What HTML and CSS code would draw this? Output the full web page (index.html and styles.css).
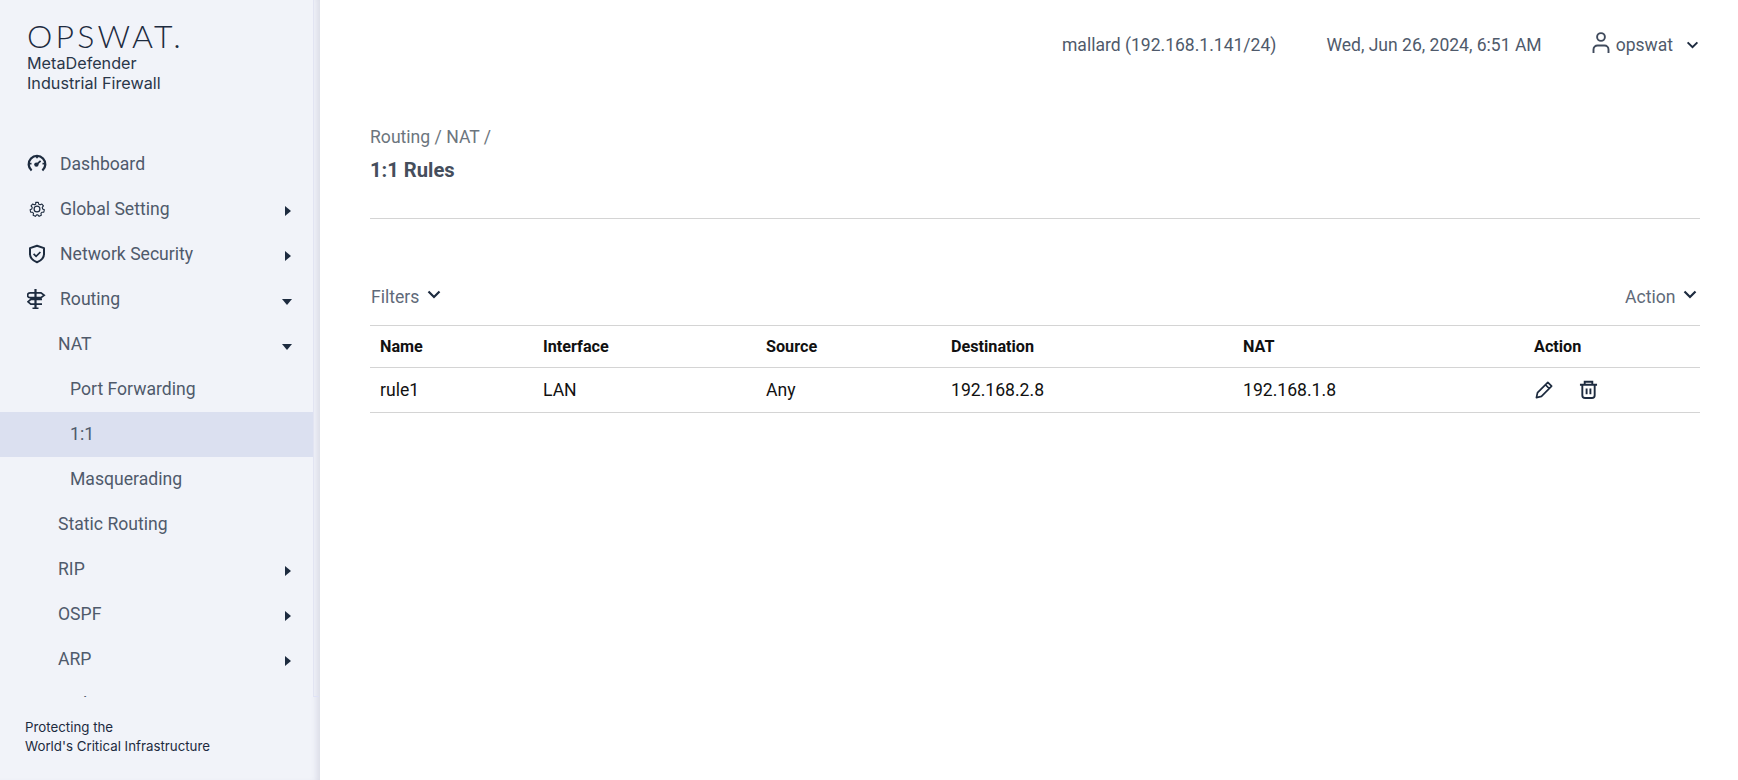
FILE: index.html
```html
<!DOCTYPE html>
<html lang="en">
<head>
<meta charset="utf-8">
<title>1:1 Rules</title>
<link rel="stylesheet" href="styles.css">
</head>
<body>
<div class="app">
  <aside class="sidebar">
    <div class="sidebar-body">
      <div class="sidebar-scroll">
        <div class="brand">
          <div class="logo">OPSWAT.</div>
          <div class="product">MetaDefender<br>Industrial Firewall</div>
        </div>
        <nav class="nav">
          <a class="item"><svg class="ico" viewBox="0 0 20 20"><path d="M4.600 16.500A8.300 8.300 0 1 1 15.400 16.500" fill="none" stroke="#1d2b3f" stroke-width="2.300"/><path d="M2 9.600h2.500M15.500 9.600H18M10 2v2.200" stroke="#1d2b3f" stroke-width="1.800"/><circle cx="9.400" cy="10.600" r="2.200" fill="#1d2b3f"/><path d="M9.800 10.300l3.800-3.500" stroke="#1d2b3f" stroke-width="1.800"/></svg><span class="label">Dashboard</span></a>
          <a class="item"><svg class="ico" viewBox="0 0 20 20"><path d="M8.600 2.800h2.800l.5 2 1.500.7 1.900-.9 1.700 2.100-1.300 1.600.4 1.600 1.900.9-.6 2.600-2.100.1-1 1.300.4 2-2.400 1.200-1.400-1.600H9.600l-1.400 1.600-2.400-1.200.4-2-1-1.300-2.100-.1-.6-2.600 1.900-.9.4-1.600-1.300-1.600 1.700-2.100 1.900.9 1.500-.7z" transform="translate(.8 .8) scale(.92)" fill="none" stroke="#1d2b3f" stroke-width="1.200" stroke-linejoin="round"/><circle cx="10" cy="10" r="2.900" fill="none" stroke="#1d2b3f" stroke-width="1.200"/></svg><span class="label">Global Setting</span><i class="caret-r"></i></a>
          <a class="item"><svg class="ico" viewBox="0 0 20 20"><path d="M10 1.800l7 2.300v5.800c0 4.200-3 6.800-7 8.300-4-1.500-7-4.100-7-8.300V4.100z" fill="none" stroke="#1d2b3f" stroke-width="2" stroke-linejoin="round"/><path d="M6.600 9.800l2.500 2.500 4.300-4.300" fill="none" stroke="#1d2b3f" stroke-width="1.700"/></svg><span class="label">Network Security</span><i class="caret-r"></i></a>
          <a class="item"><svg class="ico" viewBox="0 0 20 20"><path d="M8.500 0v19.500M5.500 19.500h6" stroke="#1d2b3f" stroke-width="2.200" fill="none"/><path d="M3 3.800h11l3.200 2.400L14 8.600H3a2.400 2.400 0 0 1 0-4.800zM15 10.400H3.800L1 12.800l2.800 2.400H15" fill="none" stroke="#1d2b3f" stroke-width="1.700"/></svg><span class="label">Routing</span><i class="caret-d"></i></a>
          <a class="item sub"><span class="label">NAT</span><i class="caret-d"></i></a>
          <a class="item subsub"><span class="label">Port Forwarding</span></a>
          <a class="item subsub active"><span class="label">1:1</span></a>
          <a class="item subsub"><span class="label">Masquerading</span></a>
          <a class="item sub"><span class="label">Static Routing</span></a>
          <a class="item sub"><span class="label">RIP</span><i class="caret-r"></i></a>
          <a class="item sub"><span class="label">OSPF</span><i class="caret-r"></i></a>
          <a class="item sub"><span class="label">ARP</span><i class="caret-r"></i></a>
          <a class="item sub"><span class="label">Multicast</span></a>
        </nav>
      </div>
      <div class="track"></div>
    </div>
    <div class="tagline">Protecting the<br>World's Critical Infrastructure</div>
  </aside>
  <main class="main">
    <header class="topbar">
      <span>mallard (192.168.1.141/24)</span>
      <span>Wed, Jun 26, 2024, 6:51 AM</span>
      <span class="user">
        <svg class="user-ico" viewBox="0 0 18 21"><circle cx="9" cy="5" r="3.900" fill="none" stroke="#3f4a5c" stroke-width="1.900"/><path d="M1.500 21v-3.500a4 4 0 0 1 4-4h7a4 4 0 0 1 4 4V21" fill="none" stroke="#3f4a5c" stroke-width="1.900"/></svg>
        <span>opswat</span>
        <svg class="user-chev" viewBox="0 0 14 9"><path d="M1.500 1.500L7 7l5.500-5.500" fill="none" stroke="#1d2b3f" stroke-width="2.200"/></svg>
      </span>
    </header>
    <section class="heading">
      <div class="crumbs">Routing / NAT /</div>
      <h1 class="title">1:1 Rules</h1>
    </section>
    <div class="toolbar">
      <span class="tool">Filters<svg class="chev" viewBox="0 0 14 9"><path d="M1.500 1.500L7 7l5.500-5.500" fill="none" stroke="#1d2b3f" stroke-width="2.200"/></svg></span>
      <span class="tool">Action<svg class="chev" viewBox="0 0 14 9"><path d="M1.500 1.500L7 7l5.500-5.500" fill="none" stroke="#1d2b3f" stroke-width="2.200"/></svg></span>
    </div>
    <table class="rules">
      <colgroup><col class="c1"><col class="c2"><col class="c3"><col class="c4"><col class="c5"><col></colgroup>
      <thead>
        <tr><th>Name</th><th>Interface</th><th>Source</th><th>Destination</th><th>NAT</th><th>Action</th></tr>
      </thead>
      <tbody>
        <tr>
          <td>rule1</td><td>LAN</td><td>Any</td><td>192.168.2.8</td><td>192.168.1.8</td>
          <td>
            <div class="actions">
              <svg class="act" viewBox="0 0 20 20"><path d="M1.500 18.500l1.200-5.300L13.500 2.500l4 4L6.800 17.300z M11 5l4 4" fill="none" stroke="#1d2b3f" stroke-width="1.800" stroke-linejoin="round"/></svg>
              <svg class="act" viewBox="0 0 20 20"><path d="M1 5h18M6 5V1.800h8V5M3.500 5v11a3 3 0 0 0 3 3h7a3 3 0 0 0 3-3V5M8 9v6M12 9v6" fill="none" stroke="#1d2b3f" stroke-width="2"/></svg>
            </div>
          </td>
        </tr>
      </tbody>
    </table>
  </main>
</div>
</body>
</html>
```

FILE: styles.css
```css
* { box-sizing: border-box; }
html, body { margin: 0; height: 100%; overflow: hidden; }
body { font-family: Roboto, "Liberation Sans", sans-serif; background: #fff; color: #4a5463; }
.app { display: flex; height: 780px; }

.sidebar { width: 320px; flex: none; display: flex; flex-direction: column; background: #f1f3f9; box-shadow: inset -7px 0 6px -4px rgba(60,60,110,.13); }
.sidebar-body { flex: 1; min-height: 0; display: flex; }
.sidebar-scroll { flex: 1; min-width: 0; display: flex; flex-direction: column; overflow: hidden; background: #f1f3f9; }
.track { width: 6px; flex: none; margin-right: 1px; border-left: 1px solid #e2e4f2; border-bottom: 1px solid #dfe2f6; }
.brand { height: 142px; flex: none; padding: 17px 0 0 27px; color: #1d2b3f; }
.logo { font-family: Lato, sans-serif; font-weight: 300; font-size: 32px; line-height: 38px; letter-spacing: 3.200px; }
.product { font-family: Inter, sans-serif; font-size: 16.200px; line-height: 20px; margin-top: -2px; color: #2a374a; }

.nav { flex: 1; min-height: 0; overflow: hidden; display: flex; flex-direction: column; }
.item { height: 45px; flex: none; display: flex; align-items: center; padding: 0 22px 2px 27px; font-size: 17.600px; color: #4f5a6b; }
.ico { width: 20px; height: 20px; flex: none; margin-right: 13px; }
.label { flex: 1; }
.sub { padding-left: 58px; }
.subsub { padding-left: 70px; }
.active { background: #dbe0f0; }
.caret-r { width: 0; height: 0; border-left: 6px solid #1d2b3f; border-top: 5px solid transparent; border-bottom: 5px solid transparent; margin-top: 5px; }
.caret-d { width: 0; height: 0; border-top: 6px solid #1d2b3f; border-left: 5px solid transparent; border-right: 5px solid transparent; margin: 7px -1px 0 0; }

.tagline { height: 83px; flex: none; padding: 21px 0 0 25px; font-family: Inter, sans-serif; font-size: 13.300px; line-height: 18.500px; color: #1d2b3f; }

.main { flex: 1; min-width: 0; padding: 0 38px 0 50px; }
.topbar { height: 88px; padding-top: 2px; display: flex; align-items: center; justify-content: flex-end; gap: 50px; font-size: 17.550px; color: #4f5a6b; }
.user { display: flex; align-items: center; }
.user-ico { width: 18px; height: 21px; margin: -5px 6px 0 0; }
.user-chev { width: 13px; height: 8px; margin: 0 1px 0 13px; }
.heading { height: 131px; border-bottom: 1px solid #d4d4d4; padding-top: 37px; }
.crumbs { font-size: 17.600px; line-height: 24px; color: #6c757d; }
.title { margin: 9px 0 0; font-size: 20.200px; line-height: 24px; font-weight: 700; color: #454e5c; }

.toolbar { height: 106px; display: flex; justify-content: space-between; align-items: flex-end; padding: 0 3px 16px 1px; }
.tool { display: flex; align-items: center; font-size: 17.600px; line-height: 24px; color: #5f6a79; }
.chev { width: 14px; height: 9px; margin: -6px 0 0 7.500px; }

.rules { width: 100%; border-collapse: collapse; table-layout: fixed; border-top: 1px solid #d4d4d4; color: #111; }
.c1 { width: 163px; } .c2 { width: 223px; } .c3 { width: 185px; } .c4 { width: 292px; } .c5 { width: 291px; }
.rules th { height: 42px; padding: 0 10px; text-align: left; font-size: 16.200px; font-weight: 700; color: #111; border-bottom: 1px solid #d4d4d4; }
.rules td { height: 45px; padding: 0 10px; font-size: 17.600px; border-bottom: 1px solid #d4d4d4; }
.actions { display: flex; align-items: center; gap: 25px; padding: 0 0 2px 1px; }
.act { width: 19px; height: 19px; flex: none; }
```
